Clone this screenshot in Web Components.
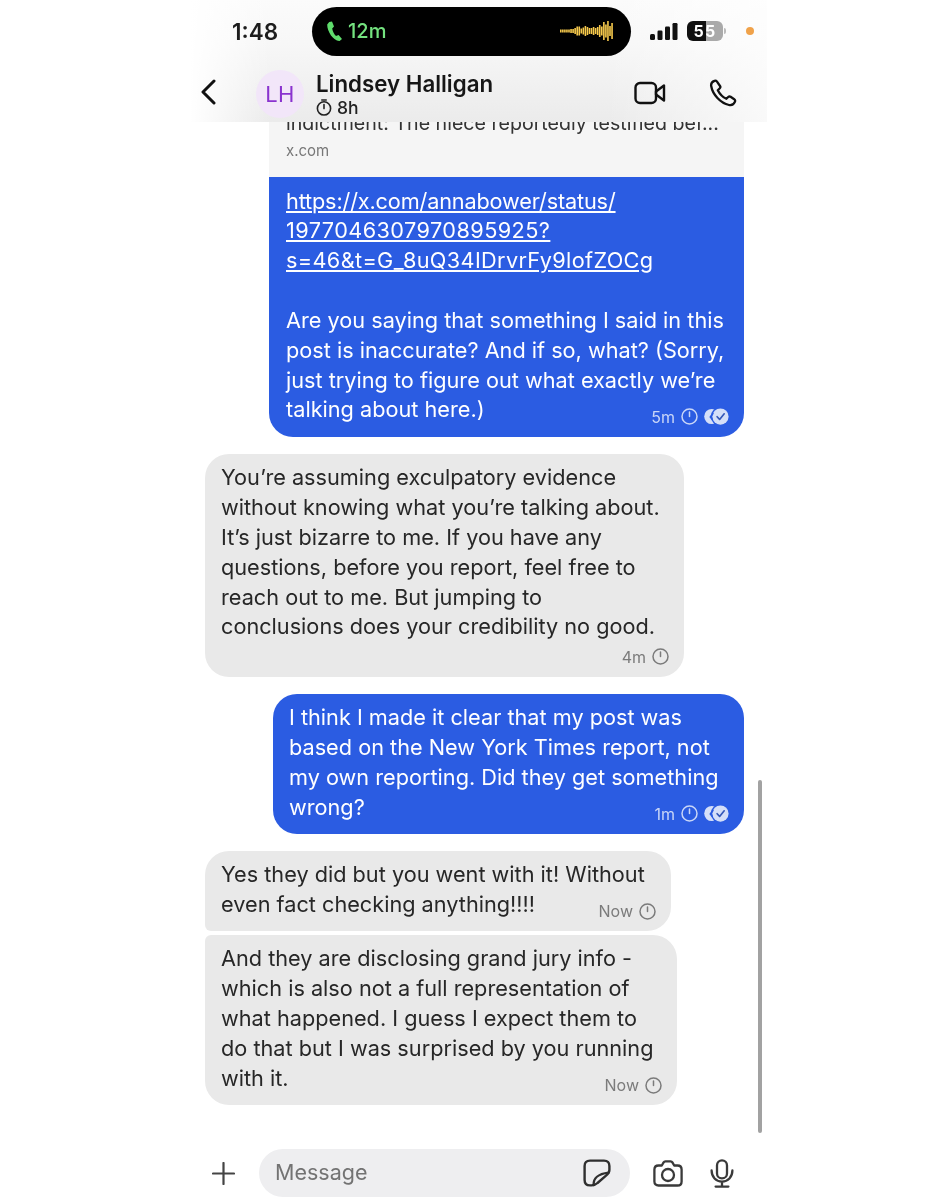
<!DOCTYPE html>
<html lang="en"><head><meta charset="utf-8"><title>Lindsey Halligan</title>
<style>
html,body{margin:0;background:#fff}
body{font-family:Inter,"Liberation Sans",sans-serif;overflow:hidden}
</style></head>
<body>
<chat-app>
  <chat-header slot="header" name="Lindsey Halligan" timer="8h" initials="LH"></chat-header>
  <link-preview text="indictment: The niece reportedly testified bef..." domain="x.com"></link-preview>
  <chat-bubble side="out" width="475" tail="flat-top" time="5m" checks>
    <a><span style="letter-spacing:-.16px">https://x.com/annabower/status/</span><br><span style="letter-spacing:.42px">1977046307970895925?</span><br><span style="letter-spacing:.35px">s=46&amp;t=G_8uQ34IDrvrFy9lofZOCg</span></a><br><br>Are you saying that something I said in this<br>post is inaccurate? And if so, what? (Sorry,<br>just trying to figure out what exactly we’re<br>talking about here.)
  </chat-bubble>
  <chat-bubble side="in" width="479" time="4m" gap="17" own-line>
    You’re assuming exculpatory evidence<br>without knowing what you’re talking about.<br>It’s just bizarre to me. If you have any<br>questions, before you report, feel free to<br>reach out to me. But jumping to<br>conclusions does your credibility no good.
  </chat-bubble>
  <chat-bubble side="out" width="471" time="1m" checks gap="17">
    I think I made it clear that my post was<br>based on the New York Times report, not<br>my own reporting. Did they get something<br>wrong?
  </chat-bubble>
  <chat-bubble side="in" width="466" time="Now" gap="17" tail="join-bottom">
    Yes they did but you went with it! Without<br>even fact checking anything!!!!
  </chat-bubble>
  <chat-bubble side="in" width="472" time="Now" gap="4" tail="join-top">
    And they are disclosing grand jury info -<br>which is also not a full representation of<br>what happened. I guess I expect them to<br>do that but I was surprised by you running<br>with it.
  </chat-bubble>
  <chat-composer slot="composer" placeholder="Message"></chat-composer>
</chat-app>
<script>
const tpl = html => { const t = document.createElement('template'); t.innerHTML = html; return t; };
class Base extends HTMLElement {
  mount(t){ this.attachShadow({mode:'open'}).appendChild(t.content.cloneNode(true)); }
}

const appT = tpl(`<style>
:host{display:flex;flex-direction:column;width:934px;height:1200px;overflow:hidden;position:relative;filter:blur(.35px)}
.thread{flex:1;position:relative;display:flex;flex-direction:column;padding-left:205px;min-height:0}
.scroll{position:absolute;left:758px;top:658px;width:4px;height:353px;border-radius:2px;background:#a2a2a2}
</style>
<slot name="header"></slot>
<div class="thread"><slot></slot><div class="scroll"></div></div>
<slot name="composer"></slot>`);
customElements.define('chat-app', class extends Base { constructor(){super();this.mount(appT);} });

const hdrT = tpl(`<style>
:host{display:flex;flex-direction:column;width:577px;height:122px;margin-left:190px;color:#111;
 background:linear-gradient(90deg,#fff 0,rgba(255,255,255,0) 14%,rgba(255,255,255,0) 72%,rgba(255,255,255,.7) 100%),linear-gradient(180deg,#fbfbfb 0,#f7f7f7 35%,#ebebeb 100%)}
.status{display:flex;align-items:center;height:62px;padding-left:42px}
.time{width:80px;font-size:22.5px;font-weight:600;margin-top:1px;color:#1d1d1d}
.island{width:319px;height:49px;box-sizing:border-box;background:#000;border-radius:25px;display:flex;align-items:center;padding:0 17px 0 14px;color:#74e27f;font-size:20px;font-weight:500}
.island .call{margin-right:5px;display:block}
.wave{margin-left:auto;display:block}
.signal{display:block;margin-left:19px}
.battery{position:relative;margin-left:9px;width:36px;height:20px;display:flex;align-items:center;justify-content:center;font-size:16px;font-weight:700;color:#fff;border-radius:6px;background:linear-gradient(90deg,#111 0 53%,#aaa 53% 100%);letter-spacing:1.2px}
.battery::after{content:"";position:absolute;left:37px;top:7px;width:2px;height:6px;border-radius:0 2px 2px 0;background:#bbb}
.dot{width:8px;height:8px;border-radius:50%;background:#f0a24a;margin-left:23px}
.nav{display:flex;align-items:center;height:60px}
.back{display:block;margin-left:10px}
.avatar{margin-left:40px;width:48px;height:48px;border-radius:50%;background:#f2e6f9;color:#8a33cf;font-size:22px;display:flex;align-items:center;justify-content:center;margin-top:4px;letter-spacing:.3px}
.who{margin-left:12px;display:flex;flex-direction:column;margin-top:3px}
.name{font-size:22.3px;font-weight:600;line-height:28px;color:#161616}
.timer{display:flex;align-items:center;gap:5px;font-size:17.5px;line-height:20px;color:#222;font-weight:500}
.acts{margin-left:auto;display:flex;align-items:center;gap:43px;margin-right:30px;margin-top:2px}
svg{display:block}
</style>
<div class="status"><div class="time">1:48</div>
<div class="island">
 <svg class="call" width="17" height="22" viewBox="0 0 17 22"><path d="M3.2 2 L6 1.4 L8 6.6 L6.2 8.4 C6.6 11 8 14 10 16 L12.6 15 L16 19 L13.6 21 C8 21.6 1 12 1.2 4.6Z" fill="#5fdc6c"/></svg>
 <span id="calltime">12m</span>
 <svg class="wave" width="54" height="20" viewBox="0 0 54 20" id="wave"></svg>
</div>
<svg class="signal" width="28" height="17" viewBox="0 0 28 17" fill="#111"><rect x="0" y="11" width="5" height="6" rx="1.5"/><rect x="7.5" y="7.5" width="5" height="9.5" rx="1.2"/><rect x="15" y="3.5" width="5" height="13.5" rx="1.2"/><rect x="22.5" y="0" width="5" height="17" rx="1.2"/></svg>
<div class="battery">55</div>
<div class="dot"></div></div>
<div class="nav">
 <svg class="back" width="16" height="26" viewBox="0 0 16 26"><path d="M14 2 L3 13 L14 24" fill="none" stroke="#111" stroke-width="3" stroke-linecap="round" stroke-linejoin="round"/></svg>
 <div class="avatar" id="av"></div>
 <div class="who"><div class="name" id="nm"></div>
  <div class="timer"><svg width="16" height="17" viewBox="0 0 16 17" fill="none" stroke="#222" stroke-width="1.6" stroke-linecap="round"><circle cx="8" cy="9.4" r="6.6"/><path d="M8 5.6V9.6M5.8 1H10.2"/></svg><span id="tm"></span></div></div>
 <div class="acts">
  <svg width="32" height="24" viewBox="0 0 32 24" fill="none" stroke="#111" stroke-width="2.4" stroke-linejoin="round"><rect x="1.5" y="2" width="20.5" height="20" rx="4.5"/><path d="M22 10.5 L30 4.5 V19.5 L22 13.5Z"/></svg>
  <svg width="28" height="28" viewBox="0 0 28 28" fill="none" stroke="#111" stroke-width="2.3" stroke-linejoin="round"><path d="M5.5 1.8 C3.4 2.5 1.8 4.5 2.2 7 C3.6 15.5 11.5 24 20 26 C22.8 26.6 25 25 26 22.6 C26.4 21.6 26 20.8 25.2 20.2 L21.6 17.8 C20.8 17.3 19.9 17.4 19.2 18 L17.4 19.8 C13.6 18 10.6 14.8 8.8 11.2 L10.8 9.2 C11.4 8.6 11.5 7.7 11 7 L8 2.6 C7.4 1.8 6.4 1.5 5.5 1.8Z"/></svg>
 </div>
</div>`);
customElements.define('chat-header', class extends Base {
  constructor(){super();this.mount(hdrT);}
  connectedCallback(){
    const r=this.shadowRoot;
    r.getElementById('av').textContent=this.getAttribute('initials');
    r.getElementById('nm').textContent=this.getAttribute('name');
    r.getElementById('tm').textContent=this.getAttribute('timer');
    const hs=[3,3,3,3,3,4,4,6,9,9,5,7,10,8,6,6,8,6,8,12,9,18,13,24,10,16];
    let s='';hs.forEach((h,i)=>{s+=`<rect x="${i*2.05}" y="${10-h/2}" width="1.6" height="${h}" fill="#f6c94c"/>`});
    r.getElementById('wave').innerHTML=s;
  }
});

const prevT = tpl(`<style>
:host{display:block;width:475px;margin-left:64px;height:55px;background:#f5f5f5;overflow:hidden;box-sizing:border-box;padding-left:17px;color:#333}
.t{font-size:19.6px;line-height:30px;margin-top:-14px;white-space:nowrap}
.d{font-size:15px;line-height:22px;color:#777;margin-top:2px}
</style><div class="t" id="t"></div><div class="d" id="d"></div>`);
customElements.define('link-preview', class extends Base {
  constructor(){super();this.mount(prevT);}
  connectedCallback(){this.shadowRoot.getElementById('t').textContent=this.getAttribute('text');this.shadowRoot.getElementById('d').textContent=this.getAttribute('domain');}
});

const bubT = tpl(`<style>
:host{display:block;box-sizing:border-box;font-size:21.7px;line-height:29.85px;white-space:nowrap;padding:9.3px 16px 0;border-radius:24px}
:host([side=in]){background:#e9e9e9;color:#272727;--meta:#7b7b7b}
:host([side=out]){background:#2b5ce2;color:#fff;margin-left:auto;margin-right:calc(934px - 744px);--meta:#c9d6f7}
:host([tail=flat-top]){border-radius:0 0 24px 24px;padding:9.5px 17px 0}
:host([tail=join-bottom]){border-bottom-left-radius:6px}
:host([tail=join-top]){border-top-left-radius:6px}
::slotted(a){text-decoration:underline;color:#fff}
.meta{display:flex;justify-content:flex-end;align-items:center;height:20px;font-size:16px;line-height:20px;color:var(--meta);gap:6px;margin:-18.7px -1px 10px 0}
:host([own-line]) .meta{margin-top:4.6px}
:host([tail=flat-top]) .meta{margin-top:-18.3px;margin-right:-2px}
svg{display:block}
.clock{fill:none;stroke:var(--meta);stroke-width:1.5;stroke-linecap:round}
.checks{margin-left:0}
</style>
<slot></slot>
<div class="meta"><span id="tm"></span>
<svg class="clock" width="17" height="17" viewBox="0 0 17 17"><circle cx="8.5" cy="8.5" r="7.5"/><path d="M8.5 4V8.5"/></svg>
<svg class="checks" id="ck" width="25" height="17" viewBox="0 0 24 16"><circle cx="7.5" cy="8" r="7.3" fill="#d5dff8"/><circle cx="15.6" cy="8" r="9" fill="#2b5ce2"/><circle cx="15.8" cy="8" r="7.8" fill="#d5dff8"/><path d="M12.6 8.2 L15 10.8 L19.4 5.4" fill="none" stroke="#3558b8" stroke-width="1.6" stroke-linecap="round" stroke-linejoin="round"/><path d="M8.6 5.2 L6 8.4 L8 10.8" fill="none" stroke="#2b5ce2" stroke-width="1.5" stroke-linecap="round" stroke-linejoin="round"/></svg></div>`);
customElements.define('chat-bubble', class extends Base {
  constructor(){super();this.mount(bubT);}
  connectedCallback(){
    const r=this.shadowRoot;
    this.style.width=this.getAttribute('width')+'px';
    if(this.hasAttribute('gap')) this.style.marginTop=this.getAttribute('gap')+'px';
    r.getElementById('tm').textContent=this.getAttribute('time');
    if(!this.hasAttribute('checks')) r.getElementById('ck').style.display='none';
  }
});

const compT = tpl(`<style>
:host{display:flex;align-items:center;height:48px;margin-bottom:3px;color:#777}
svg{display:block}
.plus{margin-left:212px;margin-right:24px}
.field{width:371px;height:48px;box-sizing:border-box;border-radius:24px;background:#eeeef0;display:flex;align-items:center;padding:0 19px 0 16px;font-size:21.5px;color:#737373}
#ph{margin-top:-2px}
.sticker{margin-left:auto}
.cam{margin-left:23px}
.mic{margin-left:27px}
</style>
<svg class="plus" width="23" height="23" viewBox="0 0 23 23" stroke="#444" stroke-width="2.2" stroke-linecap="round"><path d="M11.5 1V22M1 11.5H22"/></svg>
<div class="field"><span id="ph"></span>
<svg class="sticker" width="28" height="28" viewBox="0 0 28 28" fill="none" stroke="#2f2f2f" stroke-width="2.4" stroke-linejoin="round" stroke-linecap="round"><path d="M7 1.6H21 C24.4 1.6 26.4 3.6 26.4 7 V11 C26.4 13.4 25 15 23 16.6 L14.5 24 C12.8 25.6 11 26.4 8.6 26.4 H7 C3.6 26.4 1.6 24.4 1.6 21 V7 C1.6 3.6 3.6 1.6 7 1.6Z"/><path d="M10.6 26 C10.4 19 14.4 15 25.6 13.6"/></svg></div>
<svg class="cam" width="30" height="27" viewBox="0 0 30 27" fill="none" stroke="#3a3a3a" stroke-width="2.3" stroke-linejoin="round"><path d="M5.5 5.5H8.8 L10.6 2.4 C11 1.7 11.6 1.4 12.4 1.4 H17.6 C18.4 1.4 19 1.7 19.4 2.4 L21.2 5.5 H24.5 C27 5.5 28.6 7.1 28.6 9.6 V21.4 C28.6 23.9 27 25.5 24.5 25.5 H5.5 C3 25.5 1.4 23.9 1.4 21.4 V9.6 C1.4 7.1 3 5.5 5.5 5.5Z"/><circle cx="15" cy="15" r="6"/></svg>
<svg class="mic" width="24" height="29" viewBox="0 0 24 29" fill="none" stroke="#3a3a3a" stroke-width="2.3" stroke-linecap="round"><rect x="7" y="1.4" width="10" height="18" rx="5"/><path d="M1.6 11.5 C1.6 18 6 22.6 12 22.6 C18 22.6 22.4 18 22.4 11.5M12 22.6V27.4M5.6 27.6H18.4"/></svg>`);
customElements.define('chat-composer', class extends Base {
  constructor(){super();this.mount(compT);}
  connectedCallback(){this.shadowRoot.getElementById('ph').textContent=this.getAttribute('placeholder');}
});
</script>
</body></html>
